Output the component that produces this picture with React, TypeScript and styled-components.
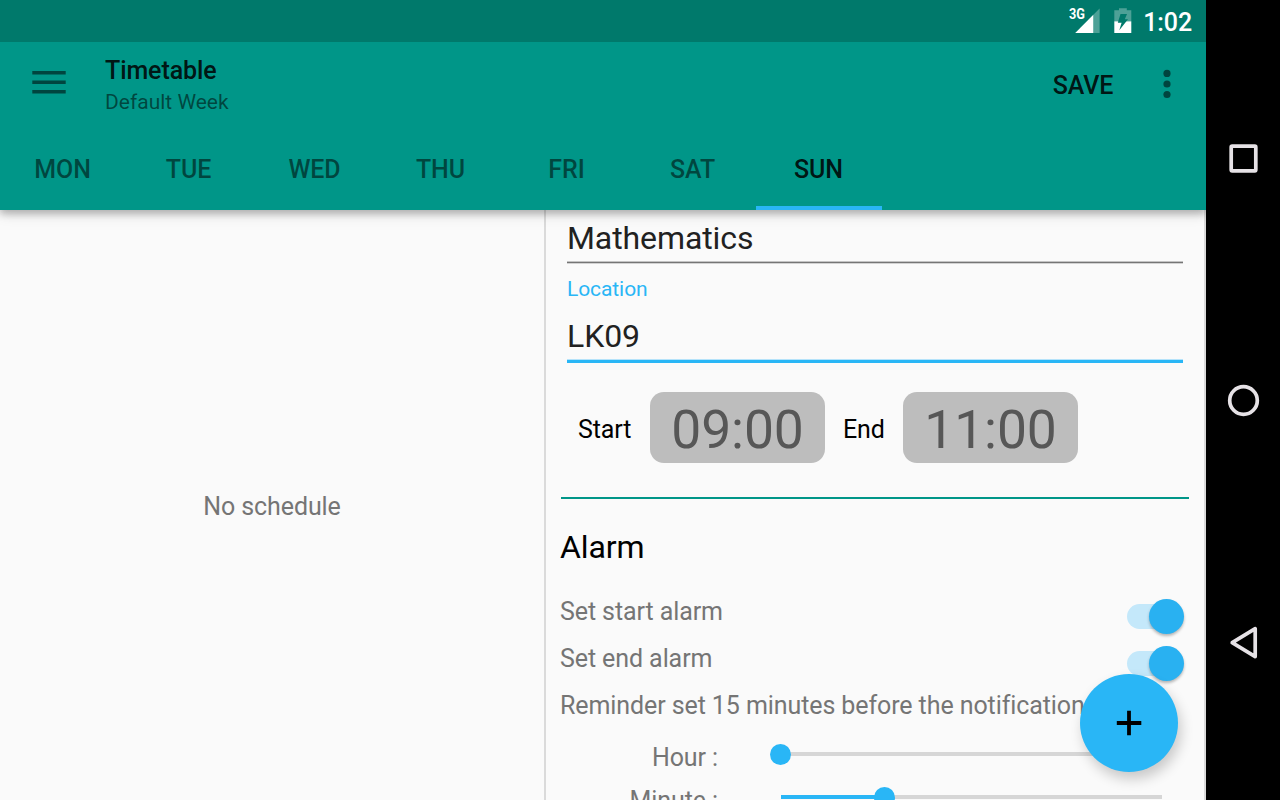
import React from "react";
import styled, { createGlobalStyle } from "styled-components";

const GlobalStyle = createGlobalStyle`
  * { box-sizing: border-box; }
  html, body { margin: 0; padding: 0; }
  body {
    width: 1280px;
    height: 800px;
    overflow: hidden;
    background: #000;
    font-family: Roboto, "Liberation Sans", sans-serif;
    font-size: 25px;
    letter-spacing: -0.09px;
  }
  button { font: inherit; letter-spacing: inherit; border: 0; padding: 0; background: none; }
`;

const ACCENT = "#29b6f6";
const PRIMARY = "#009688";

const Device = styled.div`
  display: flex;
  width: 1280px;
  height: 800px;
`;

const Screen = styled.div`
  display: flex;
  flex-direction: column;
  width: 1206px;
  height: 800px;
  background: #fafafa;
`;

const StatusBar = styled.div`
  display: flex;
  align-items: flex-start;
  justify-content: flex-end;
  flex: none;
  height: 42px;
  padding-right: 14px;
  background: #00796b;
  color: #fff;
`;

const SignalIcon = styled.svg`
  width: 32px;
  height: 42px;
  margin-right: 13px;
`;

const BatteryIcon = styled.svg`
  width: 18px;
  height: 42px;
`;

const Clock = styled.span`
  width: 60px;
  font-weight: 500;
  line-height: 45px;
  text-align: right;
`;

const Header = styled.header`
  position: relative;
  z-index: 2;
  flex: none;
  height: 168px;
  background: ${PRIMARY};
  box-shadow: 0 4px 7px rgba(0, 0, 0, 0.22), 0 3px 14px rgba(0, 0, 0, 0.14);
  clip-path: inset(0 0 -30px 0);
`;

const Toolbar = styled.div`
  display: flex;
  height: 84px;
  padding: 14px 28px 0 32px;
`;

const MenuButton = styled.button`
  width: 34px;
  height: 54px;
  margin-right: 39px;
`;

const Titles = styled.div`
  flex: 1;
`;

const Title = styled.h1`
  margin: 0;
  font-size: 25px;
  font-weight: 500;
  line-height: 29px;
  color: rgba(0, 0, 0, 0.87);
`;

const Subtitle = styled.div`
  margin-top: 4px;
  font-size: 21px;
  line-height: 26px;
  letter-spacing: 0;
  color: rgba(0, 0, 0, 0.54);
`;

const SaveButton = styled.button`
  width: 62px;
  height: 59px;
  margin-right: 46px;
  font-weight: 500;
  line-height: 59px;
  color: rgba(0, 0, 0, 0.87);
`;

const MoreButton = styled.button`
  width: 10px;
  height: 56px;
  margin: 0 6px 0 2px;
`;

const Tabs = styled.nav`
  display: flex;
  height: 84px;
`;

const Tab = styled.button<{ $active?: boolean }>`
  display: flex;
  justify-content: center;
  align-items: flex-start;
  width: 126px;
  height: 84px;
  padding: 0 1px 0 0;
  font-weight: 500;
  line-height: 87px;
  color: ${(p) => (p.$active ? "rgba(0,0,0,0.87)" : "rgba(0,0,0,0.54)")};
  box-shadow: ${(p) => (p.$active ? `inset 0 -4px 0 ${ACCENT}` : "none")};
`;

const Content = styled.main`
  position: relative;
  display: flex;
  height: 590px;
`;

const SchedulePane = styled.section`
  display: flex;
  align-items: center;
  justify-content: center;
  width: 546px;
  padding-top: 3px;
  border-right: 2px solid #dadada;
  color: #757575;
`;

const FormPane = styled.section`
  width: 660px;
  height: 590px;
  padding: 8px 15px 0 14px;
  overflow: hidden;
  border-right: 2px solid #dadada;
  color: #757575;
`;

const Field = styled.div`
  width: 616px;
  margin-left: 7px;
`;

const FieldLabel = styled.label`
  display: block;
  height: 26px;
  margin-top: 13px;
  font-size: 21px;
  line-height: 26px;
  color: ${ACCENT};
`;

const FieldValue = styled.div<{ $focused?: boolean }>`
  height: ${(p) => (p.$focused ? "61px" : "45px")};
  padding-top: ${(p) => (p.$focused ? "14px" : "0")};
  border-bottom: ${(p) => (p.$focused ? `3px solid ${ACCENT}` : "1px solid #757575")};
  box-shadow: ${(p) =>
    p.$focused
      ? "none"
      : "0 1px 0 #d2d2d2, inset 0 -1px 0 #c4c4c4"};
  background: ${(p) => (p.$focused ? "linear-gradient(#b5e3fa, #b5e3fa) 0 100% / 100% 1px no-repeat" : "none")};
  font-size: 32px;
  line-height: 40px;
  color: #212121;
`;

const TimeRow = styled.div`
  display: flex;
  height: 71px;
  margin: 29px 0 34px 18px;
  color: #000;
`;

const TimeLabel = styled.span<{ $width: number }>`
  width: ${(p) => p.$width}px;
  line-height: 75px;
`;

const TimeButton = styled.button`
  width: 175px;
  height: 71px;
  margin-right: 18px;
  border-radius: 14px;
  background: #bdbdbd;
  font-size: 53.4px;
  line-height: 75px;
  text-align: center;
  color: #575757;
`;

const Separator = styled.hr`
  width: 628px;
  height: 2px;
  margin: 0 0 0 1px;
  border: 0;
  background: ${PRIMARY};
`;

const SectionTitle = styled.h2`
  height: 40px;
  margin: 28px 0 21px;
  font-size: 32px;
  font-weight: 400;
  line-height: 40px;
  color: #000;
`;

const SettingRow = styled.div`
  display: flex;
  justify-content: space-between;
  height: 47px;
  padding-right: 5px;
  line-height: 47px;
  white-space: nowrap;
`;

const SwitchTrack = styled.span`
  display: flex;
  justify-content: flex-end;
  align-items: center;
  width: 57px;
  height: 25px;
  margin-top: 16px;
  border-radius: 12.5px;
  background: linear-gradient(90deg, #c4e8fa 45px, transparent 45px);
`;

const SwitchThumb = styled.span`
  flex: none;
  width: 35px;
  height: 35px;
  border-radius: 50%;
  background: #29b1f1;
  box-shadow: 0 2px 3px rgba(0, 0, 0, 0.28);
`;

const SliderRow = styled.div`
  display: flex;
  height: 43px;
  padding-top: 5px;
`;

const SliderLabel = styled.span`
  width: 158px;
  margin-right: 63px;
  text-align: right;
  line-height: 47px;
  white-space: nowrap;
`;

const SliderTrack = styled.span<{ $value: number }>`
  width: 381px;
  height: 4px;
  margin-top: 18px;
  padding-left: ${(p) => p.$value}px;
  background: linear-gradient(90deg, ${ACCENT} ${(p) => p.$value}px, #d6d6d6 ${(p) => p.$value}px);
`;

const SliderThumb = styled.span`
  display: block;
  width: 21px;
  height: 21px;
  margin: -8px 0 0 -11px;
  border-radius: 50%;
  background: ${ACCENT};
`;

const AddButton = styled.button`
  position: absolute;
  right: 28px;
  bottom: 28px;
  width: 98px;
  height: 98px;
  border-radius: 50%;
  background: ${ACCENT};
  box-shadow: 3px 7px 13px rgba(0, 0, 0, 0.2);
`;

const NavBar = styled.aside`
  display: flex;
  flex-direction: column;
  justify-content: space-between;
  align-items: center;
  width: 74px;
  height: 800px;
  padding: 138px 0;
  background: #000;
`;

const NavIcon = styled.svg`
  display: block;
  width: 40px;
  height: 40px;
  fill: none;
  stroke: #e6e2e6;
  stroke-width: 3.7;
  stroke-linejoin: round;
`;

const BlockSvg = styled.svg`
  display: block;
`;

const days = ["MON", "TUE", "WED", "THU", "FRI", "SAT", "SUN"];

const Switch = () => (
  <SwitchTrack role="switch" aria-checked="true">
    <SwitchThumb />
  </SwitchTrack>
);

export default function App() {
  return (
    <>
      <GlobalStyle />
      <Device>
        <Screen>
          <StatusBar>
            <SignalIcon viewBox="0 0 32 42">
              <path d="M30.6 8.5V33H24.3V14.8z" fill="#4da197" />
              <path d="M6.2 33L24.3 14.8V33z" fill="#fff" />
              <text x="0" y="19.2" fill="#fff" fontSize="14.5" fontWeight="700" textLength="15.8" lengthAdjust="spacingAndGlyphs">
                3G
              </text>
            </SignalIcon>
            <BatteryIcon viewBox="0 0 18 42">
              <path d="M5 8.2H12.8V10.2H17.3V21.3H.3V10.2H5z" fill="#4da197" />
              <path d="M.3 21.3H17.3V33H.3z" fill="#fff" />
              <path d="M6.5 14H13L10.8 19.3H14L5.3 30.3L7.6 22.8H3.8z" fill="#00796b" />
            </BatteryIcon>
            <Clock>1:02</Clock>
          </StatusBar>
          <Header>
            <Toolbar>
              <MenuButton aria-label="Menu">
                <BlockSvg width="34" height="54" viewBox="0 0 34 54">
                  <path d="M.3 16.8H33.7M.3 26.3H33.7M.3 35.8H33.7" stroke="#00453f" strokeWidth="3.6" />
                </BlockSvg>
              </MenuButton>
              <Titles>
                <Title>Timetable</Title>
                <Subtitle>Default Week</Subtitle>
              </Titles>
              <SaveButton>SAVE</SaveButton>
              <MoreButton aria-label="More options">
                <BlockSvg width="10" height="56" viewBox="0 0 10 56" fill="#00453f">
                  <circle cx="5" cy="17.4" r="3.6" />
                  <circle cx="5" cy="28" r="3.6" />
                  <circle cx="5" cy="38.5" r="3.6" />
                </BlockSvg>
              </MoreButton>
            </Toolbar>
            <Tabs>
              {days.map((day) => (
                <Tab key={day} $active={day === "SUN"}>
                  {day}
                </Tab>
              ))}
            </Tabs>
          </Header>
          <Content>
            <SchedulePane>No schedule</SchedulePane>
            <FormPane>
              <Field>
                <FieldValue>Mathematics</FieldValue>
                <FieldLabel>Location</FieldLabel>
                <FieldValue $focused>LK09</FieldValue>
              </Field>
              <TimeRow>
                <TimeLabel $width={72}>Start</TimeLabel>
                <TimeButton>09:00</TimeButton>
                <TimeLabel $width={60}>End</TimeLabel>
                <TimeButton>11:00</TimeButton>
              </TimeRow>
              <Separator />
              <SectionTitle>Alarm</SectionTitle>
              <SettingRow>
                Set start alarm
                <Switch />
              </SettingRow>
              <SettingRow>
                Set end alarm
                <Switch />
              </SettingRow>
              <SettingRow>Reminder set 15 minutes before the notification</SettingRow>
              <SliderRow>
                <SliderLabel>Hour :</SliderLabel>
                <SliderTrack $value={0}>
                  <SliderThumb />
                </SliderTrack>
              </SliderRow>
              <SliderRow>
                <SliderLabel>Minute :</SliderLabel>
                <SliderTrack $value={104}>
                  <SliderThumb />
                </SliderTrack>
              </SliderRow>
            </FormPane>
            <AddButton aria-label="Add">
              <BlockSvg width="98" height="98" viewBox="0 0 98 98">
                <path d="M36.8 49H61.3M49 36.8V61.3" stroke="#000" strokeWidth="3.8" />
              </BlockSvg>
            </AddButton>
          </Content>
        </Screen>
        <NavBar>
          <NavIcon viewBox="0 0 40 40">
            <rect x="8.2" y="8.2" width="24.6" height="24.6" rx="1" />
          </NavIcon>
          <NavIcon viewBox="0 0 40 40">
            <circle cx="20.5" cy="20.5" r="13.8" />
          </NavIcon>
          <NavIcon viewBox="0 0 40 40">
            <path d="M9.2 20.6L32.2 6.6V34.6z" />
          </NavIcon>
        </NavBar>
      </Device>
    </>
  );
}
